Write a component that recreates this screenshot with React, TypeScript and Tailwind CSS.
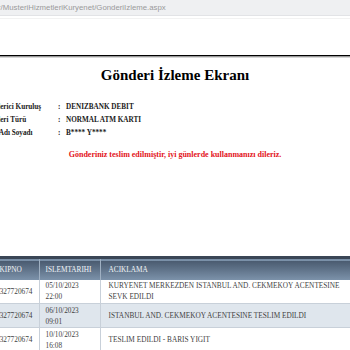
const rows = [
  { no: '1327720674', date: '05/10/2023', time: '22:00', desc: ['KURYENET MERKEZDEN ISTANBUL AND. CEKMEKOY ACENTESINE', 'SEVK EDILDI'] },
  { no: '1327720674', date: '06/10/2023', time: '09:01', desc: ['ISTANBUL AND. CEKMEKOY ACENTESINE TESLIM EDILDI'] },
  { no: '1327720674', date: '10/10/2023', time: '16:08', desc: ['TESLIM EDILDI - BARIS YIGIT'] },
];

const info = [
  ['Gönderici Kuruluş', 'DENIZBANK DEBIT'],
  ['Gönderi Türü', 'NORMAL ATM KARTI'],
  ['Alıcı Adı Soyadı', 'B**** Y****'],
];

export default function App() {
  return (
    <div className="w-[350px] h-[350px] overflow-hidden bg-white [font-family:'Liberation_Serif','Times_New_Roman',serif]">
      {/* address bar */}
      <div className="h-[16px] bg-[#eff0f2] border-b border-[#e2e3e6] [font-family:'Liberation_Sans',Arial,sans-serif] text-[7.8px] leading-[16px] text-[#9a9a9a] whitespace-nowrap -ml-[2px]">
        r/MusteriHizmetleriKuryenet/GonderiIzleme.aspx
      </div>
      <div className="h-[3px] border-b border-[#f2f2f2]" />
      <div className="h-[36px]" />
      <div className="h-[2px] bg-black border-b border-[#9a9a9a]" />
      <div className="h-[1px] bg-[#d8d8d8]" />

      <h1 className="mt-[8px] text-center text-[15px] leading-[18px] font-bold text-black">Gönderi İzleme Ekranı</h1>

      <div className="mt-[17px] -ml-[17px] text-[7.2px] leading-[13px] font-bold text-[#1a1a1a]">
        {info.map(([k, v]) => (
          <div key={k} className="flex whitespace-nowrap">
            <span className="w-[75px] shrink-0 overflow-hidden">{k}</span>
            <span className="w-[8px] shrink-0">:</span>
            <span className="text-[7.2px]">{v}</span>
          </div>
        ))}
      </div>

      <p className="mt-[8px] text-center text-[8px] leading-[13px] font-bold text-[#e3131b] whitespace-nowrap">
        Gönderiniz teslim edilmiştir, iyi günlerde kullanmanızı dileriz.
      </p>

      <div className="mt-[95px] -ml-[15px] w-[380px]">
        <table className="w-full border-collapse text-[7.3px] leading-[11px] text-[#3f3f3f]">
          <thead>
            <tr className="h-[22px] bg-gradient-to-b from-[#4a5b70] to-[#7c92aa] border-t-[3px] border-[#3a4656] text-[#f2f5f8] text-left">
              <th className="w-[54px] pl-[5.3px] font-normal border-r border-[#9fb0c2]">TAKIPNO</th>
              <th className="w-[61px] pl-[6px] font-normal border-r border-[#9fb0c2]">ISLEMTARIHI</th>
              <th className="pl-[8px] font-normal">ACIKLAMA</th>
            </tr>
          </thead>
          <tbody>
            {rows.map((r, i) => (
              <tr key={r.date} className={(i === 1 ? 'bg-[#dfe6ed] ' : 'bg-white ') + 'h-[24px] border-b border-[#c8d0d9]'}>
                <td className="pl-[11px] border-r border-[#c8d0d9] whitespace-nowrap">{r.no}</td>
                <td className="pl-[6px] border-r border-[#c8d0d9]">
                  {r.date}
                  <br />
                  {r.time}
                </td>
                <td className="pl-[8px] whitespace-nowrap">
                  {r.desc.map((d, j) => (
                    <div key={j}>{d}</div>
                  ))}
                </td>
              </tr>
            ))}
          </tbody>
        </table>
      </div>
    </div>
  );
}
